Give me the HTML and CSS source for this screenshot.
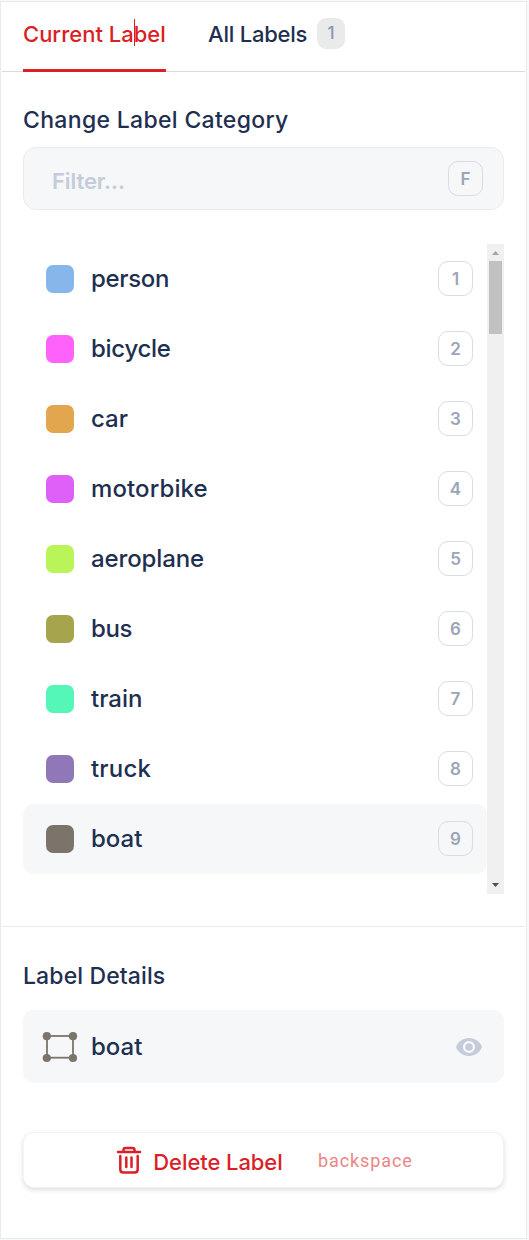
FILE: index.html
```html
<!DOCTYPE html>
<html lang="en">
<head>
<meta charset="utf-8">
<title>Labels</title>
<link rel="stylesheet" href="styles.css">
</head>
<body>
<main class="panel">
  <nav class="tabs">
    <a class="tab tab-active"><span>Current Label</span><i class="caret"></i></a>
    <a class="tab"><span class="t-all">All Labels</span><span class="count">1</span></a>
  </nav>
  <section class="category">
    <h2 class="title t-change">Change Label Category</h2>
    <div class="filter"><span class="placeholder">Filter...</span><kbd class="key">F</kbd></div>
    <div class="list">
      <ul class="rows">
        <li class="row"><i class="swatch person"></i><span class="name t-person">person</span><kbd class="key">1</kbd></li>
        <li class="row"><i class="swatch bicycle"></i><span class="name t-bicycle">bicycle</span><kbd class="key">2</kbd></li>
        <li class="row"><i class="swatch car"></i><span class="name">car</span><kbd class="key">3</kbd></li>
        <li class="row"><i class="swatch motorbike"></i><span class="name t-motorbike">motorbike</span><kbd class="key">4</kbd></li>
        <li class="row"><i class="swatch aeroplane"></i><span class="name t-aeroplane">aeroplane</span><kbd class="key">5</kbd></li>
        <li class="row"><i class="swatch bus"></i><span class="name t-bus">bus</span><kbd class="key">6</kbd></li>
        <li class="row"><i class="swatch train"></i><span class="name">train</span><kbd class="key">7</kbd></li>
        <li class="row"><i class="swatch truck"></i><span class="name t-truck">truck</span><kbd class="key">8</kbd></li>
        <li class="row selected"><i class="swatch boat"></i><span class="name">boat</span><kbd class="key">9</kbd></li>
      </ul>
      <div class="scrollbar">
        <svg width="17" height="17" viewBox="0 0 17 17"><path d="M5 11L8.500 7L12 11Z" fill="#a3a3a3"/></svg>
        <div class="thumb"></div>
        <svg class="down" width="17" height="17" viewBox="0 0 17 17"><path d="M5 6L8.500 10L12 6Z" fill="#505050"/></svg>
      </div>
    </div>
  </section>
  <section class="details">
    <h2 class="title t-details">Label Details</h2>
    <div class="item">
      <svg class="box-icon" width="36" height="32" viewBox="0 0 36 32">
        <rect x="5" y="5" width="26" height="21.700" fill="none" stroke="#7a746b" stroke-width="1.800"/>
        <g fill="#7a746b"><circle cx="4.800" cy="5.200" r="4.100"/><circle cx="31" cy="5.200" r="4.100"/><circle cx="4.800" cy="27" r="4.100"/><circle cx="31" cy="27" r="4.100"/></g>
      </svg>
      <span class="name">boat</span>
      <svg class="eye" width="26" height="18" viewBox="0 0 26 18">
        <path d="M13 0C7 0 2 3.700 0 9c2 5.300 7 9 13 9s11-3.700 13-9C24 3.700 19 0 13 0Z" fill="#c5ccd9"/>
        <circle cx="13" cy="9" r="4.900" fill="#c5ccd9" stroke="#f5f7f9" stroke-width="2.300"/>
      </svg>
    </div>
    <button class="delete">
      <svg class="trash" width="26" height="28" viewBox="0 0 26 28" fill="none" stroke="#da1f26" stroke-width="2.500" stroke-linecap="round" stroke-linejoin="round">
        <path d="M2 6H24M7.500 5.500V4Q7.500 2 9.500 2H16.500Q18.500 2 18.500 4V5.500M4.300 10V23.500Q4.300 26.500 7.300 26.500H18.700Q21.700 26.500 21.700 23.500V10M10.300 11.500V21M15.500 11.500V21"/>
      </svg>
      <span class="t-delete">Delete Label</span>
      <span class="shortcut">backspace</span>
    </button>
  </section>
</main>
</body>
</html>
```
FILE: styles.css
```css
* { box-sizing: border-box; }
body {
  margin: 0;
  padding: 1px 2px 1px 0;
  width: 529px;
  height: 1240px;
  background: #f8f9fa;
  font-family: Inter, "Liberation Sans", sans-serif;
  font-weight: 500;
  color: #1e2f50;
}
.panel {
  width: 527px;
  height: 1238px;
  border: 1px solid #e9eaea;
  background: #fff;
}
.tabs {
  display: flex;
  gap: 42px;
  height: 70px;
  margin: 0 1px;
  padding-left: 21px;
  border-bottom: 1px solid #dadcdc;
  font-size: 22px;
}
.tab {
  position: relative;
  display: flex;
  gap: 10px;
  height: 70px;
  line-height: 64px;
  white-space: nowrap;
}
.tab-active {
  width: 143px;
  color: #da1f26;
  border-bottom: 3px solid #da1f26;
}
.caret {
  position: absolute;
  left: 111px;
  top: 17px;
  width: 1px;
  height: 27px;
  background: #da1f26;
}
.t-all { width: 99px; letter-spacing: -.22px; }
.count {
  width: 28px;
  height: 31px;
  margin-top: 16px;
  border-radius: 9px;
  background: #e9ebeb;
  color: #8b95aa;
  font-size: 17px;
  line-height: 31px;
  text-align: center;
}
.category {
  height: 855px;
  margin: 0 1px;
  padding: 32px 21px 0 21px;
  border-bottom: 1px solid #e9eaea;
}
.title {
  margin: 0;
  font-size: 23px;
  font-weight: 500;
  line-height: 32px;
  white-space: nowrap;
}
.t-change { letter-spacing: .32px; }
.t-details { letter-spacing: .12px; }
.filter {
  display: flex;
  align-items: center;
  justify-content: space-between;
  height: 63px;
  margin-top: 11px;
  padding: 0 20px 0 28px;
  border: 1px solid #e9ebed;
  border-radius: 13px;
  background: #f5f7f9;
}
.placeholder {
  padding-top: 5px;
  color: #c5ccd9;
  font-size: 22px;
  font-weight: 600;
  letter-spacing: -.1px;
}
.key {
  width: 35px;
  height: 35px;
  border: 1px solid #d8dce3;
  border-radius: 10px;
  color: #9ba5b7;
  font: 600 17px/34px Inter, sans-serif;
  text-align: center;
}
.list {
  display: flex;
  height: 650px;
  margin-top: 34px;
}
.rows {
  flex: 1;
  margin: 0;
  padding: 0;
  list-style: none;
}
.row {
  display: flex;
  align-items: center;
  height: 70px;
  padding: 0 14px 0 23px;
  border-radius: 11px;
}
.row .key { margin-bottom: 1px; }
.selected, .item { background: #f5f7f9; }
.swatch {
  width: 28px;
  height: 28px;
  margin-right: 17px;
  border-radius: 7px;
}
.name {
  flex: 1;
  font-size: 24px;
  line-height: 32px;
  white-space: nowrap;
}
.t-person { letter-spacing: -.35px; }
.t-bicycle { letter-spacing: -.3px; }
.t-motorbike { letter-spacing: .12px; }
.t-aeroplane { letter-spacing: -.12px; }
.t-bus { letter-spacing: -.4px; }
.t-truck { letter-spacing: .2px; }
.person { background: #87b7ea; }
.bicycle { background: #ff61fb; }
.car { background: #e2a64f; }
.motorbike { background: #df5ff9; }
.aeroplane { background: #b9f558; }
.bus { background: #a6a44d; }
.train { background: #55f7b8; }
.truck { background: #9077b7; }
.boat { background: #7a746b; }
.scrollbar {
  display: flex;
  flex-direction: column;
  width: 17px;
  background: #f0f0f0;
}
.thumb {
  width: 13px;
  height: 73px;
  margin: 0 2px;
  background: #c1c1c1;
}
.down { margin-top: auto; }
.details { padding: 33px 22px 0 22px; }
.item {
  display: flex;
  align-items: center;
  height: 73px;
  margin-top: 18px;
  padding: 0 22px 0 19px;
  border-radius: 11px;
}
.box-icon { margin-right: 13px; }
.delete {
  display: flex;
  align-items: center;
  width: 481px;
  height: 56px;
  margin-top: 49px;
  padding: 0 0 0 92px;
  border: 1px solid #f2f3f5;
  border-radius: 11px;
  background: #fff;
  box-shadow: 0 2px 5px rgba(30, 47, 80, .16);
  color: #da1f26;
  font: 500 22px/32px Inter, sans-serif;
  white-space: nowrap;
}
.trash { margin-right: 11px; }
.t-delete { width: 130px; padding-top: 3px; letter-spacing: -.08px; }
.shortcut {
  margin-left: 35px;
  padding-top: 2px;
  color: #ec8588;
  font: 400 18px/28px Roboto, sans-serif;
  letter-spacing: .9px;
}
```
